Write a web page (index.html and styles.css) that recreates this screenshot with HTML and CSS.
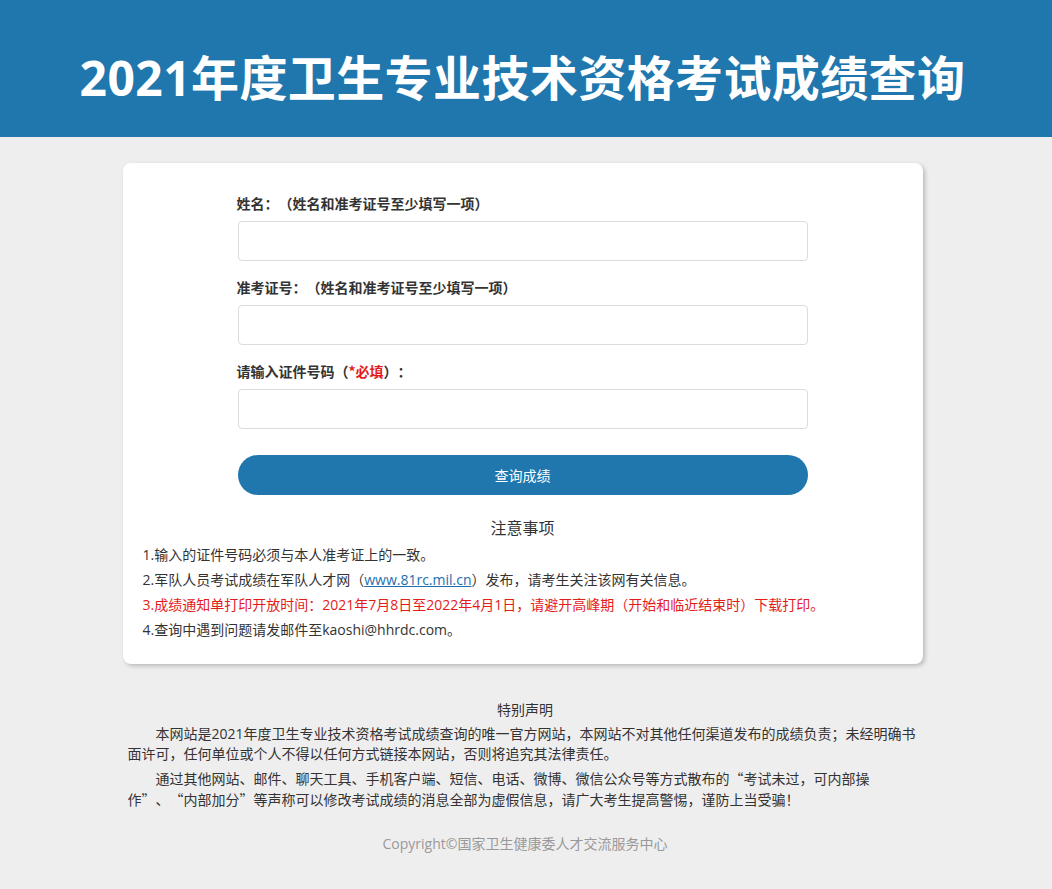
FILE: index.html
```html
<!DOCTYPE html>
<html lang="zh-CN">
<head>
<meta charset="utf-8">
<title>2021年度卫生专业技术资格考试成绩查询</title>
<link rel="stylesheet" href="styles.css">
</head>
<body>
<header class="banner">
  <h1 class="banner-title">2021年度卫生专业技术资格考试成绩查询</h1>
</header>
<main class="page">
  <section class="card">
    <form class="query-form">
      <label class="field-label">姓名：（姓名和准考证号至少填写一项）</label>
      <input class="field-input" type="text">
      <label class="field-label">准考证号：（姓名和准考证号至少填写一项）</label>
      <input class="field-input" type="text">
      <label class="field-label">请输入证件号码（<span class="required">*必填</span>）：</label>
      <input class="field-input" type="text">
      <button class="submit-btn" type="button">查询成绩</button>
    </form>
    <h2 class="notes-title">注意事项</h2>
    <ul class="notes">
      <li>1.输入的证件号码必须与本人准考证上的一致。</li>
      <li>2.军队人员考试成绩在军队人才网（<a class="notes-link" href="#">www.81rc.mil.cn</a>）发布，请考生关注该网有关信息。</li>
      <li class="notes-red">3.成绩通知单打印开放时间：2021年7月8日至2022年4月1日，请避开高峰期（开始和临近结束时）下载打印。</li>
      <li>4.查询中遇到问题请发邮件至kaoshi@hhrdc.com。</li>
    </ul>
  </section>
  <footer class="statement">
    <h3 class="statement-title">特别声明</h3>
    <p class="statement-text">本网站是2021年度卫生专业技术资格考试成绩查询的唯一官方网站，本网站不对其他任何渠道发布的成绩负责；未经明确书面许可，任何单位或个人不得以任何方式链接本网站，否则将追究其法律责任。</p>
    <p class="statement-text">通过其他网站、邮件、聊天工具、手机客户端、短信、电话、微博、微信公众号等方式散布的<span class="cjk">“</span>考试未过，可内部操<br>作<span class="cjk">”</span>、<span class="cjk">“</span>内部加分<span class="cjk">”</span>等声称可以修改考试成绩的消息全部为虚假信息，请广大考生提高警惕，谨防上当受骗！</p>
    <p class="copyright">Copyright©国家卫生健康委人才交流服务中心</p>
  </footer>
</main>
</body>
</html>
```
FILE: styles.css
```css
* { box-sizing: border-box; }

html, body {
  margin: 0;
  padding: 0;
}

body {
  background: #efeeef;
  font-family: "Open Sans", "Noto Sans", "Noto Sans CJK SC", sans-serif;
  color: #333;
  font-size: 14px;
  text-spacing-trim: space-all;
}

.cjk {
  font-family: "Noto Sans CJK SC", sans-serif;
}

.banner {
  background: #1f77ad;
  height: 137px;
  padding: 50px 7px 0 0;
}

.banner-title {
  margin: 0;
  text-align: center;
  color: #fff;
  font-family: "Noto Sans", "Noto Sans CJK SC", sans-serif;
  font-weight: 700;
  font-size: 48px;
  line-height: 56px;
  letter-spacing: 0.4px;
}

.page {
  padding: 26px 7px 40px 0;
}

.card {
  width: 800px;
  margin: 0 auto;
  background: #fff;
  border-radius: 8px;
  box-shadow: 2px 2px 4px rgba(0, 0, 0, 0.22);
  padding: 30px 20px 22px;
}

.query-form {
  width: 570px;
  margin: 0 auto;
  display: flex;
  flex-direction: column;
}

.field-label {
  font-family: "Noto Sans CJK SC", sans-serif;
  font-weight: 700;
  font-size: 14px;
  line-height: 20px;
  color: #333;
  margin: 0 0 8px -1px;
}

.required {
  color: #e31b1b;
}

.field-input {
  height: 40px;
  border: 1px solid #dcdcdc;
  border-radius: 4px;
  background: #fff;
  margin: 0 0 16px;
  padding: 0 10px;
  font-size: 14px;
}

.submit-btn {
  margin-top: 10px;
  height: 40px;
  border: none;
  border-radius: 20px;
  background: #1f77ad;
  color: #fff;
  font-family: "Noto Sans CJK SC", sans-serif;
  font-size: 14px;
  cursor: pointer;
}

.notes-title {
  margin: 20px 0 3px;
  text-align: center;
  font-family: "Noto Sans CJK SC", sans-serif;
  font-weight: 400;
  font-size: 16px;
  line-height: 24px;
  color: #333;
}

.notes {
  list-style: none;
  margin: 0;
  padding: 0;
}

.notes li {
  font-size: 14px;
  line-height: 25px;
  color: #333;
}

.notes .notes-red {
  color: #e31b1b;
}

.notes-link {
  color: #1e6eb0;
  text-decoration: underline;
}

.statement {
  width: 800px;
  margin: 0 auto;
  padding: 36px 0 0 5px;
}

.statement-title {
  margin: 0 0 4px;
  text-align: center;
  font-weight: 400;
  font-size: 14px;
  line-height: 20px;
  color: #333;
}

.statement-text {
  margin: 0 0 4px;
  text-indent: 2em;
  font-size: 14px;
  line-height: 20px;
  color: #333;
}

.copyright {
  margin: 24px 0 0;
  text-align: center;
  font-size: 14px;
  line-height: 20px;
  color: #999;
}
```
